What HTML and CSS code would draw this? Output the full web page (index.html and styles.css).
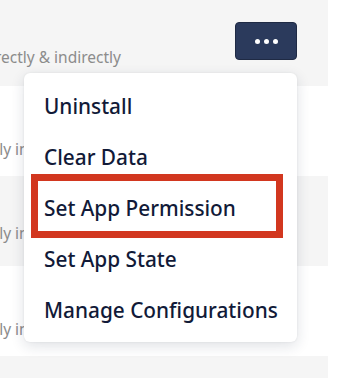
FILE: index.html
```html
<!DOCTYPE html>
<html>
<head>
<meta charset="utf-8">
<link rel="stylesheet" href="styles.css">
</head>
<body>
<div class="page">
  <div class="rows">
    <div class="row row-first shaded">
      <div class="desc-end"><span class="desc">Installed directly &amp; indirectly</span></div>
      <button class="more" aria-label="More actions"><span class="dot"></span><span class="dot"></span><span class="dot"></span></button>
    </div>
    <div class="row"><span class="desc shifted">Directly installed</span></div>
    <div class="row shaded"><span class="desc shifted up">Directly installed</span></div>
    <div class="row"><span class="desc shifted">Directly installed</span></div>
    <div class="row row-last shaded"></div>
  </div>
  <div class="menu">
    <div class="item">Uninstall</div>
    <div class="item">Clear Data</div>
    <div class="item">Set App Permission</div>
    <div class="item">Set App State</div>
    <div class="item">Manage Configurations</div>
    <div class="highlight"></div>
  </div>
</div>
</body>
</html>
```

FILE: styles.css
```css
html, body {
  margin: 0;
  padding: 0;
  background: #ffffff;
  overflow: hidden;
}
body {
  font-family: "Noto Sans", "Open Sans", sans-serif;
}
.page {
  position: relative;
  width: 351px;
  height: 378px;
  overflow: hidden;
}
.rows {
  display: flex;
  flex-direction: column;
  width: 328px;
}
.row {
  height: 90px;
  box-sizing: border-box;
  display: flex;
  align-items: flex-start;
  padding-top: 53px;
}
.row-first {
  height: 86px;
  padding-top: 0;
  justify-content: space-between;
  padding-right: 31px;
}
.row-last {
  height: 23px;
}
.shaded {
  background: #f5f5f5;
}
.desc {
  font-size: 15.5px;
  color: #8c8c8c;
  white-space: nowrap;
  line-height: 20px;
}
.desc-end {
  width: 121px;
  display: flex;
  justify-content: flex-end;
  margin-top: 47px;
}
.shifted {
  margin-left: -44px;
}
.up {
  margin-top: -6px;
}
.more {
  margin-top: 22px;
  width: 62px;
  height: 38px;
  background: #2b3a5c;
  border: 1px solid #1f2a44;
  border-radius: 4px;
  display: flex;
  align-items: center;
  justify-content: center;
  gap: 4px;
  padding: 0;
}
.dot {
  width: 5px;
  height: 5px;
  border-radius: 50%;
  background: #ffffff;
}
.menu {
  position: absolute;
  left: 24px;
  top: 73px;
  width: 273px;
  height: 269px;
  box-sizing: border-box;
  padding: 7px 0;
  background: #ffffff;
  border-radius: 6px;
  box-shadow: 0 4px 14px rgba(30, 40, 70, 0.14), 0 0 2px rgba(0, 0, 0, 0.08);
  display: flex;
  flex-direction: column;
}
.item {
  height: 51px;
  display: flex;
  align-items: center;
  padding-left: 20px;
  font-size: 20.8px;
  font-weight: 500;
  color: #111a38;
  white-space: nowrap;
}
.highlight {
  position: absolute;
  left: 7px;
  top: 101px;
  width: 252px;
  height: 64px;
  box-sizing: border-box;
  border: 7px solid #d2371f;
}
```
